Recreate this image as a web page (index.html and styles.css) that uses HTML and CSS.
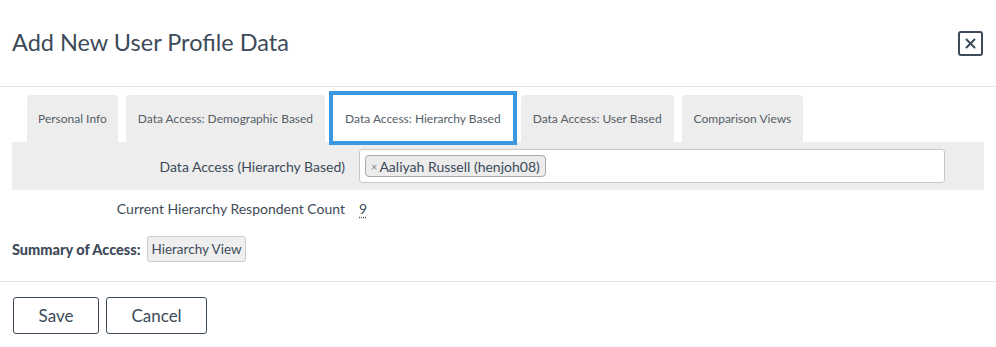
FILE: index.html
```html
<!DOCTYPE html>
<html lang="en">
<head>
    <meta charset="UTF-8">
    <meta name="viewport" content="width=device-width, initial-scale=1.0">
    <title>Add New User Profile Data</title>
    <link rel="stylesheet" href="styles.css">
</head>
<body>
    <div class="modal">
        <header class="modal-header">
            <h1>Add New User Profile Data</h1>
            <button class="close-btn" aria-label="Close">
                <svg width="11" height="11" viewBox="0 0 11 11">
                    <path d="M1.5 1.5 L9.5 9.5 M9.5 1.5 L1.5 9.5" stroke="#3d4a59" stroke-width="2" stroke-linecap="round"/>
                </svg>
            </button>
        </header>

        <div class="modal-body">
            <ul class="tabs">
                <li class="tab">Personal Info</li>
                <li class="tab">Data Access: Demographic Based</li>
                <li class="tab active">Data Access: Hierarchy Based</li>
                <li class="tab">Data Access: User Based</li>
                <li class="tab">Comparison Views</li>
            </ul>

            <div class="tab-panel">
                <div class="form-row">
                    <label class="form-label">Data Access (Hierarchy Based)</label>
                    <div class="select-box">
                        <span class="chip"><span class="chip-x">×</span>Aaliyah Russell (henjoh08)</span>
                    </div>
                </div>
            </div>

            <div class="form-row count-row">
                <span class="form-label">Current Hierarchy Respondent Count</span>
                <span class="count">9</span>
            </div>

            <div class="summary">
                <strong>Summary of Access:</strong>
                <span class="tag">Hierarchy View</span>
            </div>
        </div>

        <footer class="modal-footer">
            <button class="btn">Save</button>
            <button class="btn">Cancel</button>
        </footer>
    </div>
</body>
</html>
```

FILE: styles.css
```css
:root {
    --text: #3d4a59;
    --muted: #555d66;
    --border: #e5e5e5;
    --panel: #ededed;
    --blue: #3a97e0;
}

* {
    margin: 0;
    padding: 0;
    box-sizing: border-box;
    font-family: Lato, 'Open Sans', sans-serif;
}

body {
    background-color: #ffffff;
    color: var(--text);
}

.modal-header {
    height: 87px;
    display: flex;
    align-items: center;
    justify-content: space-between;
    padding: 0 13px 0 12px;
    border-bottom: 1px solid var(--border);
}

h1 {
    font-size: 23.5px;
    font-weight: 400;
    color: var(--text);
    margin-top: -2px;
}

.close-btn {
    width: 25px;
    height: 25px;
    border: 2px solid var(--text);
    border-radius: 3px;
    background: none;
    display: flex;
    align-items: center;
    justify-content: center;
    cursor: pointer;
}

.modal-body {
    padding: 8px 12px 0;
}

.tabs {
    list-style: none;
    display: flex;
    align-items: flex-end;
    gap: 8px;
    padding-left: 15px;
}

.tab {
    height: 47px;
    display: flex;
    align-items: center;
    padding: 0 12px;
    background-color: var(--panel);
    border-radius: 4px 4px 0 0;
    font-size: 12px;
    color: var(--muted);
    cursor: pointer;
}

.tab:first-child {
    padding: 0 11px;
}

.tab.active {
    height: 46px;
    margin-bottom: 1px;
    background-color: #ffffff;
    border-radius: 0;
    outline: 4px solid var(--blue);
}

.tab-panel {
    background-color: var(--panel);
    height: 48px;
    display: flex;
    align-items: center;
}

.form-row {
    display: grid;
    grid-template-columns: 333px 586px;
    column-gap: 14px;
    align-items: center;
    font-size: 14px;
}

.form-label {
    text-align: right;
}

.select-box {
    height: 34px;
    background-color: #ffffff;
    border: 1px solid #c8c8c8;
    border-radius: 3px;
    display: flex;
    align-items: center;
    padding: 0 5px;
}

.chip {
    height: 22px;
    display: inline-flex;
    align-items: center;
    padding: 0 5px;
    background-color: #ececec;
    border: 1px solid #aaaaaa;
    border-radius: 4px;
    font-size: 14px;
}

.chip-x {
    font-size: 11px;
    color: #888;
    margin-right: 2px;
}

.count-row {
    height: 36px;
}

.count {
    text-decoration: underline dotted;
    text-underline-offset: 3px;
}

.summary {
    display: flex;
    align-items: center;
    gap: 7px;
    height: 26px;
    margin-top: 10px;
    font-size: 14.5px;
}

.summary strong {
    font-weight: 900;
}

.tag {
    height: 26px;
    display: inline-flex;
    align-items: center;
    padding: 0 3px;
    background-color: #efefef;
    border: 1px solid #cccccc;
    border-radius: 3px;
    font-size: 13.5px;
}

.modal-footer {
    margin-top: 19px;
    border-top: 1px solid var(--border);
    padding: 15px 13px;
    display: flex;
    gap: 7px;
}

.btn {
    height: 37px;
    width: 86px;
    background-color: #ffffff;
    border: 1px solid var(--text);
    border-radius: 3px;
    font-size: 17px;
    color: var(--text);
    cursor: pointer;
}

.btn + .btn {
    width: 101px;
}
```
